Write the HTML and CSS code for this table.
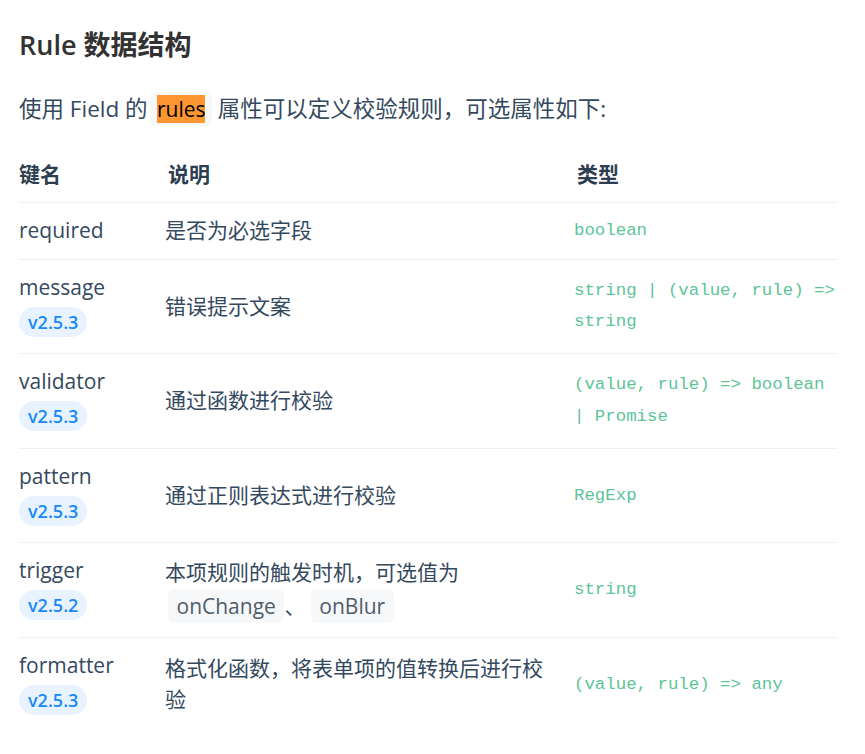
FILE: index.html
```html
<!DOCTYPE html>
<html lang="zh-CN">
<head>
<meta charset="utf-8">
<title>Rule 数据结构</title>
<link rel="stylesheet" href="styles.css">
</head>
<body>
<section class="doc">
  <h3 class="doc-title">Rule 数据结构</h3>
  <p class="doc-text">使用 Field 的 <code class="inline-code"><mark class="hit">rules</mark></code> 属性可以定义校验规则，可选属性如下:</p>
  <table class="doc-table">
    <colgroup>
      <col class="col-key">
      <col class="col-desc">
      <col class="col-type">
    </colgroup>
    <thead>
      <tr><th>键名</th><th>说明</th><th>类型</th></tr>
    </thead>
    <tbody>
      <tr>
        <td>required</td>
        <td>是否为必选字段</td>
        <td><em class="type">boolean</em></td>
      </tr>
      <tr>
        <td>message<span class="tag">v2.5.3</span></td>
        <td>错误提示文案</td>
        <td><em class="type">string | (value, rule) => string</em></td>
      </tr>
      <tr>
        <td>validator<span class="tag">v2.5.3</span></td>
        <td>通过函数进行校验</td>
        <td><em class="type">(value, rule) => boolean | Promise</em></td>
      </tr>
      <tr>
        <td>pattern<span class="tag">v2.5.3</span></td>
        <td>通过正则表达式进行校验</td>
        <td><em class="type">RegExp</em></td>
      </tr>
      <tr>
        <td>trigger<span class="tag">v2.5.2</span></td>
        <td>本项规则的触发时机，可选值为<br><code class="chip">onChange</code>、 <code class="chip">onBlur</code></td>
        <td><em class="type">string</em></td>
      </tr>
      <tr>
        <td>formatter<span class="tag">v2.5.3</span></td>
        <td>格式化函数，将表单项的值转换后进行校验</td>
        <td><em class="type">(value, rule) => any</em></td>
      </tr>
    </tbody>
  </table>
</section>
</body>
</html>
```

FILE: styles.css
```css
html, body {
  margin: 0;
  padding: 0;
  background: #fff;
}

body {
  font-family: "Open Sans", "Noto Sans CJK SC", sans-serif;
  color: #34495e;
}

.doc {
  padding: 25px 19px 0;
}

.doc-title {
  margin: 0 0 26px;
  font-size: 27px;
  line-height: 40px;
  font-weight: 600;
  color: #323233;
}

.doc-text {
  margin: 0 0 19.5px;
  font-size: 22.5px;
  line-height: 36px;
  color: #34495e;
}

.inline-code {
  font-family: "Open Sans", "Noto Sans CJK SC", sans-serif;
  font-size: 21px;
  padding: 2.5px 6.5px;
  margin-left: -3px;
  background: #f7f8fa;
  border-radius: 6px;
}

.hit {
  background: #ff9632;
  color: #000;
}

.doc-table {
  width: 818px;
  table-layout: fixed;
  border-collapse: collapse;
  font-size: 21px;
  line-height: 31.5px;
}

.col-key { width: 131px; }
.col-desc { width: 409px; }
.col-type { width: 278px; }

.doc-table th,
.doc-table td {
  padding: 12px 15px;
  text-align: left;
  vertical-align: middle;
}

.doc-table th {
  font-weight: 600;
  color: #2c3e50;
  border-bottom: 1px solid #eff2f5;
}

.doc-table th + th {
  padding-left: 18px;
}

.doc-table th:first-child,
.doc-table td:first-child {
  padding-left: 0;
}

.doc-table th:last-child,
.doc-table td:last-child {
  padding-right: 0;
}

.doc-table tbody tr td {
  border-bottom: 1px solid #eff2f5;
}

.doc-table tbody tr:last-child td {
  border-bottom: none;
}

.tag {
  display: block;
  width: fit-content;
  margin: 3.5px 0 4.5px;
  padding: 0 9px;
  height: 30px;
  line-height: 30px;
  font-size: 18px;
  font-weight: 600;
  color: #1989fa;
  background: #e8f3ff;
  border-radius: 15px;
}

.type {
  display: block;
  font-style: normal;
  font-family: "Liberation Mono", monospace;
  font-size: 17.4px;
  line-height: 31.5px;
  color: #5cc497;
}

.chip {
  display: inline-block;
  font-family: "Open Sans", "Noto Sans CJK SC", sans-serif;
  font-size: 21px;
  line-height: 34px;
  padding: 0 8.5px;
  margin: 1px 0 0 3px;
  color: #4e5d6c;
  background: #f7f8fa;
  border-radius: 6px;
}

.chip + .chip {
  margin-left: 0;
}
```
